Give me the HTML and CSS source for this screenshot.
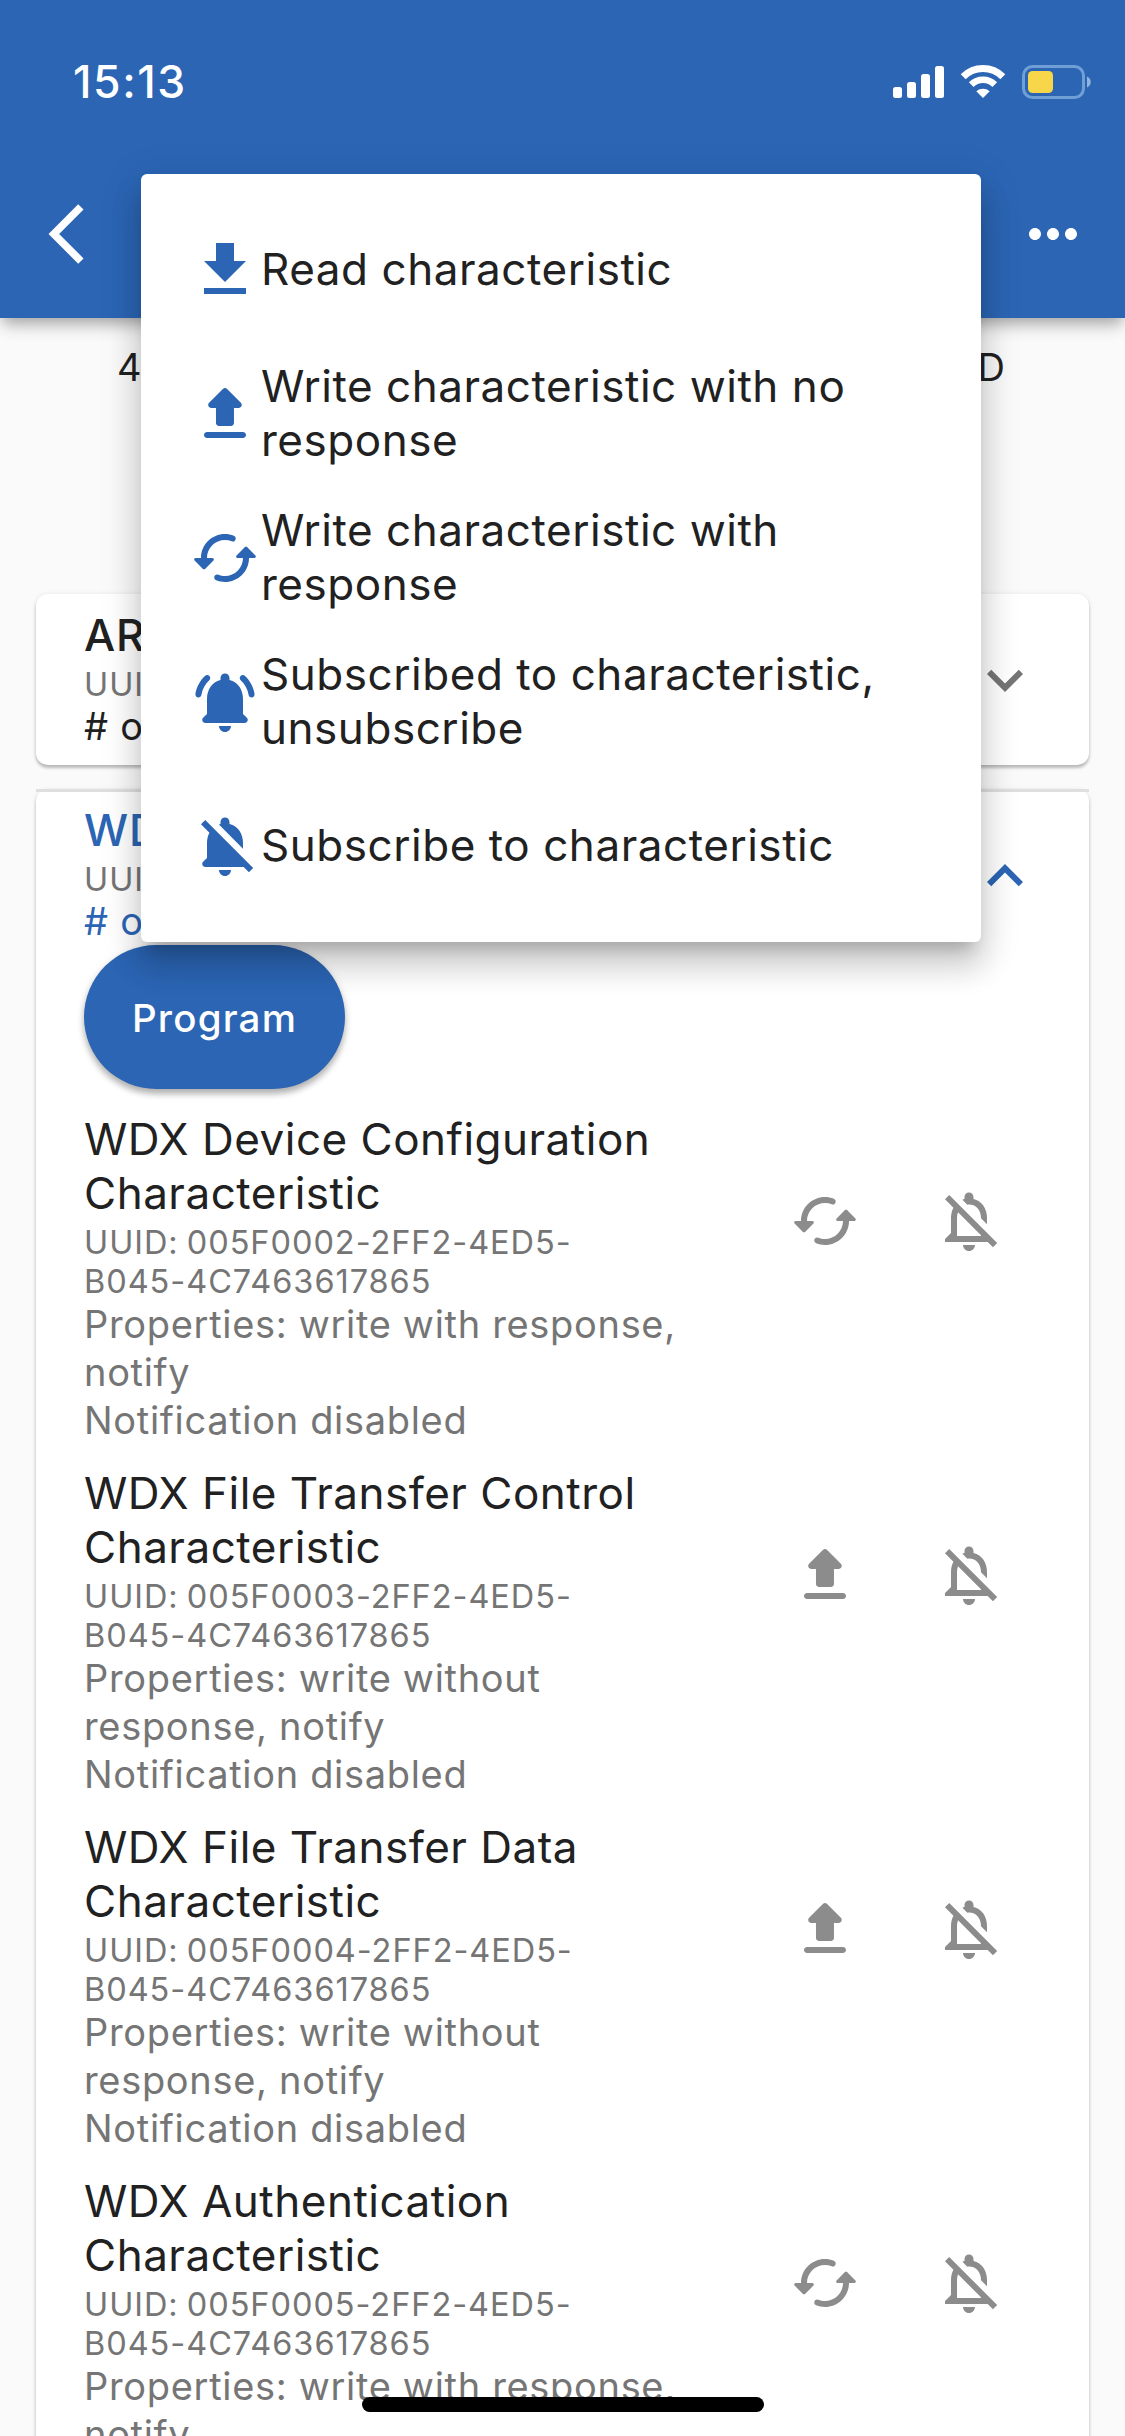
FILE: index.html
```html
<!DOCTYPE html>
<html lang="en">
<head>
<meta charset="utf-8">
<title>Services</title>
<link rel="stylesheet" href="styles.css">
</head>
<body>
<svg class="sprite" aria-hidden="true">
  <symbol id="download" viewBox="0 0 24 24"><path d="M19 9h-4V3H9v6H5l7 7 7-7zM5 18v2h14v-2H5z"/></symbol>
  <symbol id="upload" viewBox="0 0 24 24"><path d="M7.4 10h1.59v5c0 .55.45 1 1 1h4c.55 0 1-.45 1-1v-5h1.59c.89 0 1.34-1.08.71-1.71L12.7 3.7a.996.996 0 0 0-1.41 0L6.7 8.29c-.63.63-.19 1.71.7 1.71zM5 19c0 .55.45 1 1 1h12c.55 0 1-.45 1-1s-.45-1-1-1H6c-.55 0-1 .45-1 1z"/></symbol>
  <symbol id="sync" viewBox="0 0 24 24"><path d="M18.65 8.35l-2.79 2.79c-.32.32-.1.86.35.86H18c0 3.31-2.69 6-6 6-.79 0-1.56-.15-2.25-.44-.36-.15-.77-.04-1.04.23-.51.51-.33 1.37.34 1.64.91.37 1.91.57 2.95.57 4.42 0 8-3.58 8-8h1.79c.45 0 .67-.54.35-.85l-2.79-2.79c-.19-.2-.51-.2-.7-.01zM6 12c0-3.31 2.69-6 6-6 .79 0 1.56.15 2.25.44.36.15.77.04 1.04-.23.51-.51.33-1.37-.34-1.64C14.04 4.2 13.04 4 12 4c-4.42 0-8 3.58-8 8H2.21c-.45 0-.67.54-.35.85l2.79 2.79c.2.2.51.2.71 0l2.79-2.79c.31-.31.09-.85-.36-.85H6z"/></symbol>
  <symbol id="bell-on" viewBox="0 0 24 24"><path d="M12 22c1.1 0 2-.9 2-2h-4c0 1.1.9 2 2 2zm6-6v-5c0-3.07-1.63-5.64-4.5-6.32V4c0-.83-.67-1.5-1.5-1.5s-1.5.67-1.5 1.5v.68C7.64 5.36 6 7.92 6 11v5l-1.29 1.29c-.63.63-.19 1.71.7 1.71h13.17c.89 0 1.34-1.08.71-1.71L18 16zM6.77 4.73c.42-.38.43-1.03.03-1.43-.38-.38-1-.39-1.39-.02C3.7 4.84 2.52 6.96 2.14 9.34c-.09.61.38 1.16 1 1.16.48 0 .9-.35.98-.83.3-1.94 1.26-3.67 2.65-4.94zM18.6 3.28c-.4-.37-1.02-.36-1.4.02-.4.4-.38 1.04.03 1.42 1.38 1.27 2.35 3 2.65 4.94.07.48.49.83.98.83.61 0 1.09-.55.99-1.16-.38-2.37-1.55-4.48-3.25-6.05z"/></symbol>
  <symbol id="bell-off" viewBox="0 0 24 24"><path d="M12 22c1.1 0 2-.9 2-2h-4c0 1.1.9 2 2 2zM5.41 3.35L4 4.76l2.81 2.81C6.29 8.57 6 9.73 6 11v5l-1.29 1.29c-.63.63-.19 1.71.7 1.71h12.83l1.74 1.74 1.41-1.41L5.41 3.35zM18 12.9V11c0-3.07-1.63-5.64-4.5-6.32V4c0-.83-.67-1.5-1.5-1.5s-1.5.67-1.5 1.5v.68c-.2.04-.36.09-.52.15L18 12.9z"/></symbol>
  <symbol id="bell-off-line" viewBox="0 0 24 24"><path d="M12 22c1.1 0 2-.9 2-2h-4c0 1.1.9 2 2 2zm0-15.5c2.49 0 4 2.02 4 4.5v.1l2 2V11c0-3.07-1.63-5.64-4.5-6.32V4c0-.83-.67-1.5-1.5-1.5s-1.5.67-1.5 1.5v.68c-.24.06-.47.15-.69.23l1.64 1.64c.18-.02.36-.05.55-.05zM5.41 3.35L4 4.76l2.81 2.81C6.29 8.57 6 9.74 6 11v5l-2 2v1h14.24l1.74 1.74 1.41-1.41L5.41 3.35zM16 17H8v-6c0-.68.12-1.32.34-1.9L16 16.76V17z"/></symbol>
  <symbol id="expand" viewBox="0 0 24 24"><path d="M16.59 8.59L12 13.17 7.41 8.59 6 10l6 6 6-6z"/></symbol>
  <symbol id="back" viewBox="0 0 24 24"><path d="M17.51 3.87L15.73 2.1 5.84 12l9.9 9.9 1.77-1.77L9.38 12l8.13-8.13z"/></symbol>
  <symbol id="more" viewBox="0 0 24 24"><path d="M6 10c-1.1 0-2 .9-2 2s.9 2 2 2 2-.9 2-2-.9-2-2-2zm12 0c-1.1 0-2 .9-2 2s.9 2 2 2 2-.9 2-2-.9-2-2-2zm-6 0c-1.1 0-2 .9-2 2s.9 2 2 2 2-.9 2-2-.9-2-2-2z"/></symbol>
</svg>

<div class="screen">
  <header class="app-bar">
    <div class="status">
      <span class="time">15:13</span>
      <svg class="status-icons" viewBox="0 0 200 36">
        <g fill="#fff">
          <rect x="1" y="23" width="9" height="11" rx="2.5"/>
          <rect x="15" y="18" width="9" height="16" rx="2.5"/>
          <rect x="29" y="10" width="9" height="24" rx="2.5"/>
          <rect x="43" y="2" width="9" height="32" rx="2.5"/>
          <path d="M91 34l-6.7-6.8a10.5 10.5 0 0 1 13.4 0z"/>
        </g>
        <g fill="none" stroke="#fff">
          <path d="M71.2 12.7a28 28 0 0 1 39.6 0" stroke-width="7"/>
          <path d="M79.2 20.7a16.7 16.7 0 0 1 23.6 0" stroke-width="6.6"/>
        </g>
        <rect x="131.500" y="2.500" width="60" height="31" rx="9" fill="none" stroke="#709fd5" stroke-width="3"/>
        <rect x="136" y="7" width="25" height="22" rx="4.500" fill="#f8d64a"/>
        <path d="M195 12.500c5 1.800 5 9.200 0 11z" fill="#8fb4de"/>
      </svg>
    </div>
    <nav class="toolbar">
      <svg class="icon"><use href="#back"/></svg>
      <svg class="icon"><use href="#more"/></svg>
    </nav>
  </header>

  <main class="content">
    <div class="device-id"><span>4</span><span>D</span></div>

    <section class="card">
      <div class="service">
        <div class="service-text">
          <div class="title">AR</div>
          <div class="uuid">UUI</div>
          <div class="count"># o</div>
        </div>
        <svg class="icon chevron"><use href="#expand"/></svg>
      </div>
    </section>

    <section class="card open">
      <div class="service">
        <div class="service-text">
          <div class="title">WD</div>
          <div class="uuid">UUI</div>
          <div class="count"># o</div>
        </div>
        <svg class="icon chevron up"><use href="#expand"/></svg>
      </div>
      <button class="program">Program</button>

      <article class="characteristic">
        <div>
          <h2 class="name">WDX Device Configuration<br>Characteristic</h2>
          <p class="uuid">UUID: 005F0002-2FF2-4ED5-<br>B045-4C7463617865</p>
          <p class="props">Properties: write with response,<br>notify<br>Notification disabled</p>
        </div>
        <div class="actions"><svg class="icon"><use href="#sync"/></svg><svg class="icon"><use href="#bell-off-line"/></svg></div>
      </article>

      <article class="characteristic">
        <div>
          <h2 class="name">WDX File Transfer Control<br>Characteristic</h2>
          <p class="uuid">UUID: 005F0003-2FF2-4ED5-<br>B045-4C7463617865</p>
          <p class="props">Properties: write without<br>response, notify<br>Notification disabled</p>
        </div>
        <div class="actions"><svg class="icon"><use href="#upload"/></svg><svg class="icon"><use href="#bell-off-line"/></svg></div>
      </article>

      <article class="characteristic">
        <div>
          <h2 class="name">WDX File Transfer Data<br>Characteristic</h2>
          <p class="uuid">UUID: 005F0004-2FF2-4ED5-<br>B045-4C7463617865</p>
          <p class="props">Properties: write without<br>response, notify<br>Notification disabled</p>
        </div>
        <div class="actions"><svg class="icon"><use href="#upload"/></svg><svg class="icon"><use href="#bell-off-line"/></svg></div>
      </article>

      <article class="characteristic">
        <div>
          <h2 class="name">WDX Authentication<br>Characteristic</h2>
          <p class="uuid">UUID: 005F0005-2FF2-4ED5-<br>B045-4C7463617865</p>
          <p class="props">Properties: write with response,<br>notify</p>
        </div>
        <div class="actions"><svg class="icon"><use href="#sync"/></svg><svg class="icon"><use href="#bell-off-line"/></svg></div>
      </article>
    </section>
  </main>

  <ul class="menu">
    <li><svg class="icon"><use href="#download"/></svg><span>Read characteristic</span></li>
    <li><svg class="icon"><use href="#upload"/></svg><span>Write characteristic with no<br>response</span></li>
    <li><svg class="icon"><use href="#sync"/></svg><span>Write characteristic with<br>response</span></li>
    <li><svg class="icon"><use href="#bell-on"/></svg><span>Subscribed to characteristic,<br>unsubscribe</span></li>
    <li><svg class="icon"><use href="#bell-off"/></svg><span>Subscribe to characteristic</span></li>
  </ul>

  <div class="home-indicator"></div>
</div>
</body>
</html>
```
FILE: styles.css
```css
* { box-sizing: border-box; }

body {
  margin: 0;
  background: #fafafa;
  color: #212121;
  font-family: Inter, "Liberation Sans", sans-serif;
}

h2, p, ul { margin: 0; padding: 0; font-weight: 400; list-style: none; }

.sprite { display: none; }

.screen {
  position: relative;
  width: 1125px;
  height: 2436px;
  overflow: hidden;
}

.icon { display: block; flex: none; width: 72px; height: 72px; fill: currentColor; }

/* App bar */
.app-bar {
  position: relative;
  height: 318px;
  background: #2b65b4;
  color: #fff;
  box-shadow: 0 6px 12px -3px rgba(0, 0, 0, .2), 0 12px 15px -3px rgba(0, 0, 0, .16), 0 3px 30px rgba(0, 0, 0, .04);
}

.status {
  display: flex;
  justify-content: space-between;
  align-items: flex-start;
  height: 150px;
  padding: 64px 33px 0 73px;
}

.time { margin-top: -9px; font-size: 44.5px; font-weight: 500; line-height: 54px; letter-spacing: 1.6px; }

.status-icons { width: 200px; height: 36px; }

.toolbar {
  display: flex;
  justify-content: space-between;
  align-items: center;
  height: 168px;
  padding: 0 36px 0 31px;
}

/* Page content */
.content { padding: 0 36px; }

.device-id {
  display: flex;
  justify-content: space-between;
  height: 276px;
  padding: 25px 84px 0 81px;
  font-size: 38px;
  line-height: 48px;
}

.card {
  height: 171px;
  border-radius: 12px;
  background: #fff;
  box-shadow: 0 3px 3px rgba(0, 0, 0, .2), 0 1px 5px rgba(0, 0, 0, .12);
}

.card.open {
  position: relative;
  height: 1760px;
  margin-top: 24px;
}

.card.open::before {
  content: "";
  position: absolute;
  top: 0;
  left: 0;
  right: 0;
  height: 3px;
  background: #dfdfdf;
}

.service {
  display: flex;
  justify-content: space-between;
  height: 156px;
  padding: 14px 48px 0;
}

.title { font-size: 44px; font-weight: 500; line-height: 54px; letter-spacing: .9px; }
.service .uuid { margin-top: 3px; }
.count { margin-top: -2px; font-size: 38px; line-height: 48px; letter-spacing: .73px; }
.chevron { margin-top: 36px; color: #757575; }
.chevron.up { margin-top: 37px; transform: rotate(180deg); }
.open .title, .open .count, .open .chevron { color: #2b65b4; }

.uuid { color: #757575; font-size: 32.5px; line-height: 39px; letter-spacing: .95px; word-spacing: -2px; }

.program {
  display: block;
  width: 261px;
  height: 144px;
  margin: 0 0 23px 48px;
  padding: 1px 0 0;
  border: 0;
  border-radius: 72px;
  background: #2b65b4;
  color: #fff;
  font: 500 38.5px/48px Inter, "Liberation Sans", sans-serif;
  letter-spacing: 1.2px;
  box-shadow: 0 5px 6px rgba(0, 0, 0, .26), 0 2px 10px rgba(0, 0, 0, .1);
}

.characteristic {
  display: flex;
  justify-content: space-between;
  height: 354px;
  padding: 0 48px;
}

.name { font-size: 44px; line-height: 54px; letter-spacing: .5px; }
.characteristic .uuid { margin-top: 3px; }
.props { margin-top: -1px; color: #757575; font-size: 38px; line-height: 48px; letter-spacing: .68px; }

.actions { display: flex; gap: 72px; padding: 73px 36px 0; color: #8c8c8c; }

/* Popup menu */
.menu {
  position: absolute;
  top: 174px;
  left: 141px;
  width: 840px;
  height: 768px;
  padding: 24px 0;
  border-radius: 6px;
  background: #fff;
  font-size: 44px;
  line-height: 54px;
  letter-spacing: .54px;
  box-shadow: 0 15px 15px -9px rgba(0, 0, 0, .2), 0 24px 30px 3px rgba(0, 0, 0, .14), 0 9px 42px 6px rgba(0, 0, 0, .09);
}

.menu li { display: flex; align-items: center; height: 144px; padding: 0 48px; }
.menu span { padding-bottom: 2px; }
.menu .icon { color: #2b65b4; }

.home-indicator {
  position: absolute;
  left: 362px;
  top: 2397px;
  width: 402px;
  height: 15px;
  border-radius: 8px;
  background: #000;
}
```
